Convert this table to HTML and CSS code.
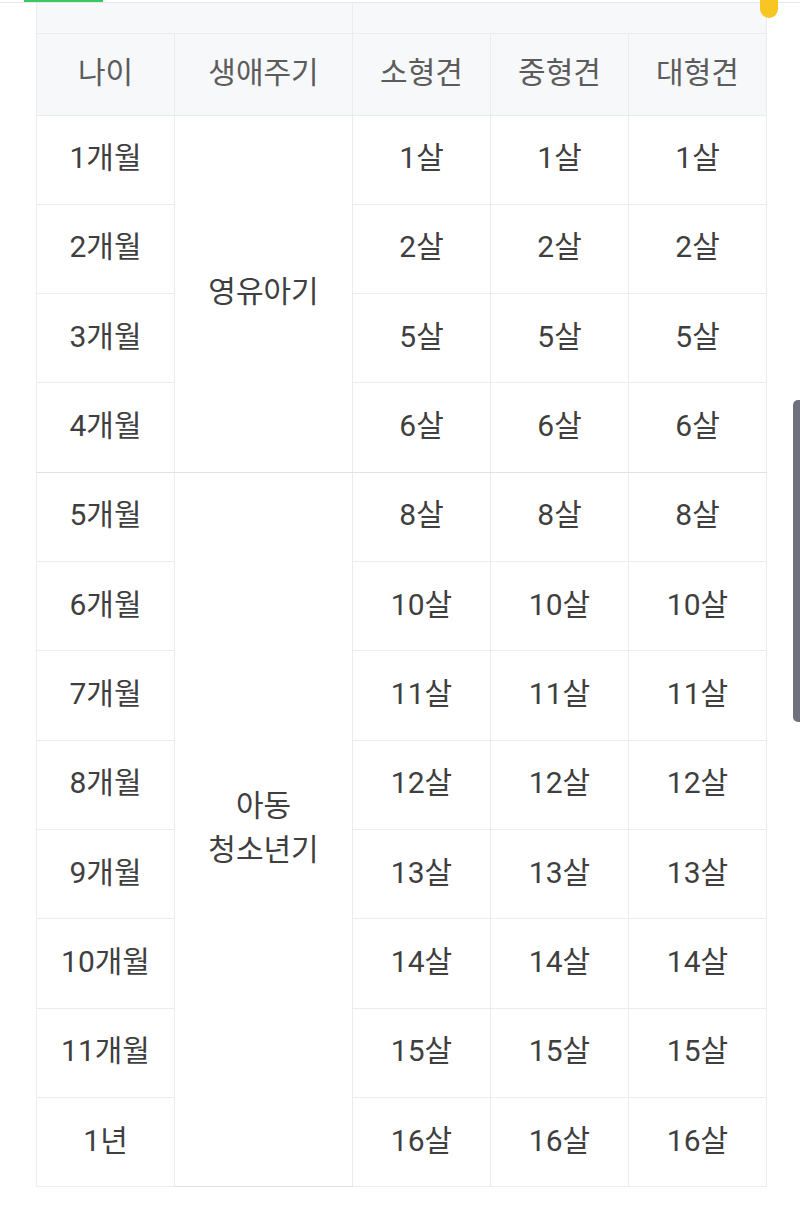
FILE: index.html
```html
<!DOCTYPE html>
<html lang="ko">
<head>
<meta charset="utf-8">
<link rel="stylesheet" href="styles.css">
</head>
<body>
<div class="topline"><span class="greenbar"></span></div>
<span class="yellow-dot"></span>
<div class="wrap">
<table class="age-table">
  <colgroup>
    <col class="c1"><col class="c2"><col class="c3"><col class="c4"><col class="c5">
  </colgroup>
  <tr class="cut">
    <td colspan="2"></td>
    <td colspan="3"></td>
  </tr>
  <tr class="head">
    <th>나이</th><th>생애주기</th><th>소형견</th><th>중형견</th><th>대형견</th>
  </tr>
  <tr><td>1개월</td><td rowspan="4" class="stage">영유아기</td><td>1살</td><td>1살</td><td>1살</td></tr>
  <tr><td>2개월</td><td>2살</td><td>2살</td><td>2살</td></tr>
  <tr><td>3개월</td><td>5살</td><td>5살</td><td>5살</td></tr>
  <tr class="grp-end"><td>4개월</td><td>6살</td><td>6살</td><td>6살</td></tr>
  <tr><td>5개월</td><td rowspan="8" class="stage">아동<br>청소년기</td><td>8살</td><td>8살</td><td>8살</td></tr>
  <tr><td>6개월</td><td>10살</td><td>10살</td><td>10살</td></tr>
  <tr><td>7개월</td><td>11살</td><td>11살</td><td>11살</td></tr>
  <tr><td>8개월</td><td>12살</td><td>12살</td><td>12살</td></tr>
  <tr><td>9개월</td><td>13살</td><td>13살</td><td>13살</td></tr>
  <tr><td>10개월</td><td>14살</td><td>14살</td><td>14살</td></tr>
  <tr><td>11개월</td><td>15살</td><td>15살</td><td>15살</td></tr>
  <tr><td>1년</td><td>16살</td><td>16살</td><td>16살</td></tr>
</table>
</div>
<div class="scrollbar"></div>
</body>
</html>
```
FILE: styles.css
```css
html, body {
  margin: 0;
  padding: 0;
  background: #ffffff;
}
body {
  width: 800px;
  height: 1206px;
  overflow: hidden;
  position: relative;
  font-family: Roboto, "Noto Sans CJK KR", "Noto Sans", sans-serif;
}
.topline {
  height: 2px;
  border-bottom: 1px solid #e6e8eb;
  position: relative;
}
.greenbar {
  position: absolute;
  left: 24px;
  top: 0;
  width: 79px;
  height: 2px;
  background: #3cc763;
}
.yellow-dot {
  position: absolute;
  left: 760px;
  top: -8px;
  width: 18px;
  height: 26px;
  border-radius: 9px;
  background: #f8c622;
}
.wrap {
  padding-left: 36px;
}
.age-table {
  border-collapse: collapse;
  table-layout: fixed;
  width: 730px;
}
.c1 { width: 138px; }
.c2 { width: 178px; }
.c3 { width: 138px; }
.c4 { width: 138px; }
.c5 { width: 138px; }
.age-table td, .age-table th {
  border: 1px solid #eaecef;
  padding: 0;
  text-align: center;
  vertical-align: middle;
  font-size: 30px;
  font-weight: 400;
  color: #3f3f3f;
  line-height: 44px;
}
.age-table tr {
  height: 89.33px;
}
.age-table tr.cut {
  height: 30px;
}
.age-table tr.cut td {
  background: #f7f8fa;
  border-top: none;
}
.age-table tr.head {
  height: 82px;
}
.age-table th {
  background: #f7f8fa;
  color: #5c5c5c;
  padding-bottom: 2px;
}
.age-table td {
  padding-bottom: 3px;
}
.age-table tr.grp-end td,
.age-table td.stage {
  border-bottom-color: #e0e2e6;
}
.scrollbar {
  position: absolute;
  left: 793px;
  top: 400px;
  width: 7px;
  height: 322px;
  border-radius: 5px 0 0 5px;
  background: #70707e;
}
```
